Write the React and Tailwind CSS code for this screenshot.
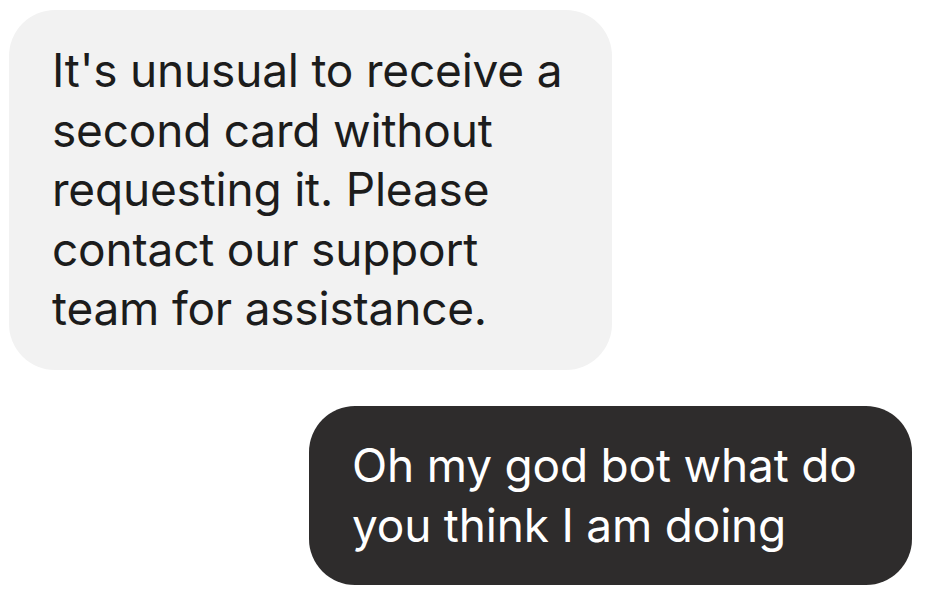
export default function App() {
  return (
    <div className="w-[928px] h-[605px] bg-white flex flex-col font-['Inter','Noto_Sans',sans-serif] text-[46px] leading-[59.5px] tracking-[-0.2px]">
      <div className="ml-[9px] mt-[10px] w-[603px] h-[360px] rounded-[46px] bg-[#f2f2f2] text-[#1c1c1c] pl-[43px] pt-[31px]">
        It's unusual to receive a
        <br />
        second card without
        <br />
        requesting it. Please
        <br />
        contact our support
        <br />
        team for assistance.
      </div>
      <div className="ml-[309px] mt-[36px] w-[603px] h-[179px] rounded-[46px] bg-[#2e2c2c] text-white pl-[43px] pt-[30px]">
        Oh my god bot what do
        <br />
        you think I am doing
      </div>
    </div>
  )
}
